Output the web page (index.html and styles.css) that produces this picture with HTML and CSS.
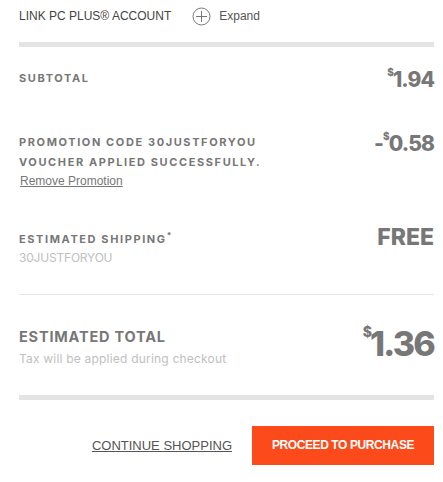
FILE: index.html
```html
<!DOCTYPE html>
<html lang="en">
<head>
    <meta charset="UTF-8">
    <meta name="viewport" content="width=device-width, initial-scale=1.0">
    <title>Order Summary</title>
    <link rel="stylesheet" href="styles.css">
</head>
<body>
    <div class="summary">
        <div class="link-row">
            <span class="link-label">LINK PC PLUS® ACCOUNT</span>
            <span class="expand">
                <svg class="plus-icon" width="19" height="19" viewBox="0 0 19 19">
                    <circle cx="9.5" cy="9.5" r="8.5" fill="none" stroke="#777" stroke-width="1"/>
                    <path d="M9.5 4v11M4 9.5h11" stroke="#777" stroke-width="1"/>
                </svg>
                Expand
            </span>
        </div>

        <div class="bar"></div>

        <div class="row subtotal">
            <div class="label">SUBTOTAL</div>
            <div class="price"><sup>$</sup>1.94</div>
        </div>

        <div class="row promo">
            <div>
                <div class="label">PROMOTION CODE 30JUSTFORYOU<br>VOUCHER APPLIED SUCCESSFULLY.</div>
                <a class="remove" href="#">Remove Promotion</a>
            </div>
            <div class="price">-<sup>$</sup>0.58</div>
        </div>

        <div class="row shipping">
            <div>
                <div class="label">ESTIMATED SHIPPING<sup>*</sup></div>
                <div class="note">30JUSTFORYOU</div>
            </div>
            <div class="price free">FREE</div>
        </div>

        <div class="line"></div>

        <div class="row total">
            <div>
                <div class="label big">ESTIMATED TOTAL</div>
                <div class="note tax">Tax will be applied during checkout</div>
            </div>
            <div class="price big"><sup>$</sup>1.36</div>
        </div>

        <div class="bar"></div>

        <div class="actions">
            <a class="continue" href="#">CONTINUE SHOPPING</a>
            <button class="proceed">PROCEED TO PURCHASE</button>
        </div>
    </div>
</body>
</html>
```

FILE: styles.css
```css
body {
    margin: 0;
    padding: 0;
    background: #fff;
    font-family: 'Liberation Sans', Arial, sans-serif;
    color: #555;
}
.summary {
    padding: 0 9px 0 19px;
}
.link-row {
    display: flex;
    align-items: center;
    height: 32px;
    font-size: 12px;
    color: #444;
}
.expand {
    display: flex;
    align-items: center;
    gap: 8px;
    margin-left: 21px;
    color: #555;
}
.bar {
    height: 5px;
    background: #e4e4e4;
    margin-top: 10px;
}
.row {
    display: flex;
    justify-content: space-between;
    align-items: flex-start;
}
.label {
    font-family: 'Inter', sans-serif;
    font-size: 11px;
    font-weight: 700;
    letter-spacing: 1.6px;
    line-height: 20px;
    color: #777;
}
.label sup {
    font-size: 8px;
    font-weight: 800;
    letter-spacing: 0;
}
.price {
    font-family: 'Inter', sans-serif;
    font-size: 21px;
    font-weight: 800;
    letter-spacing: -0.9px;
    color: #777;
    line-height: 24px;
}
.price sup {
    font-size: 10px;
    vertical-align: top;
    line-height: 10px;
    position: relative;
    top: -1px;
}
.subtotal {
    margin-top: 21px;
}
.promo {
    margin-top: 40px;
}
.remove {
    display: block;
    font-size: 12px;
    color: #777;
    margin-left: 1px;
    line-height: 18px;
}
.shipping {
    margin-top: 35px;
}
.note {
    font-family: 'Inter', sans-serif;
    font-size: 12px;
    color: #c0c0c0;
    line-height: 18px;
    letter-spacing: -0.2px;
}
.free {
    font-size: 23px;
    letter-spacing: 0;
}
.line {
    height: 1px;
    background: #e6e6e6;
    margin-top: 27px;
}
.total {
    margin-top: 32px;
}
.label.big {
    font-size: 14.5px;
    letter-spacing: 0.8px;
}
.tax {
    letter-spacing: 0.2px;
    margin-top: 3px;
}
.price.big {
    font-size: 34px;
    letter-spacing: -1.8px;
    line-height: 34px;
}
.price.big sup {
    font-size: 14px;
    top: 0;
}
.total + .bar {
    margin-top: 27px;
}
.actions {
    display: flex;
    justify-content: flex-end;
    align-items: center;
    gap: 20px;
    margin-top: 26px;
}
.continue {
    font-size: 13px;
    color: #555;
}
.proceed {
    width: 182px;
    height: 39px;
    border: none;
    background: #fc4a1a;
    color: #fff;
    font-family: 'Liberation Sans', Arial, sans-serif;
    font-size: 12px;
    font-weight: 700;
    letter-spacing: -0.4px;
    cursor: pointer;
}
```
